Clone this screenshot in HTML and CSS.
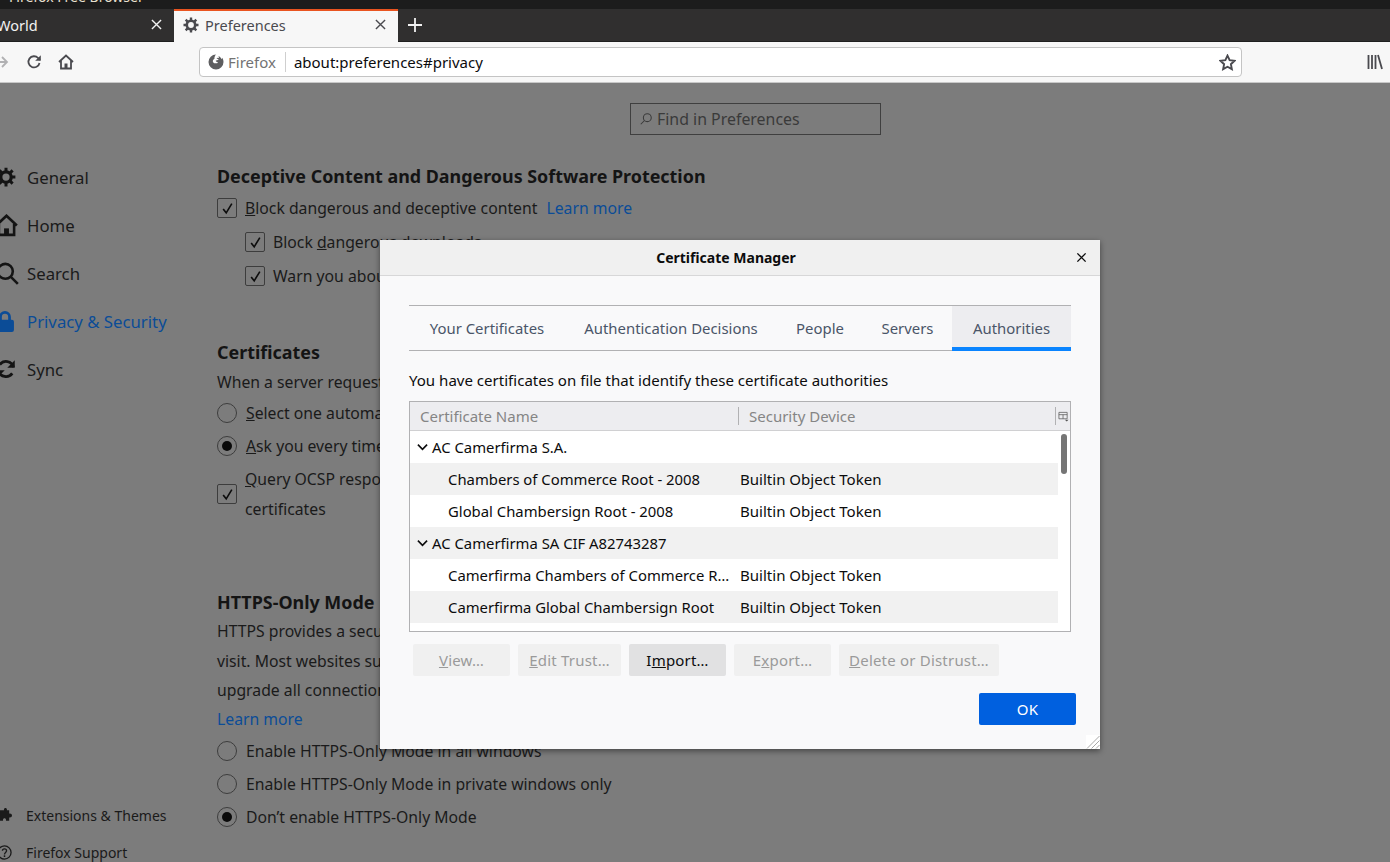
FILE: index.html
```html
<!DOCTYPE html>
<html lang="en">

<head>
    <meta charset="UTF-8">
    <meta name="viewport" content="width=device-width, initial-scale=1.0">
    <title>Preferences</title>
    <link rel="stylesheet" href="styles.css">
</head>

<body>
    <div class="titlebar"><span>Firefox Free Browser</span></div>

    <div class="tabbar">
        <div class="tab">
            <span class="tab-title">World</span>
            <svg class="tab-close" viewBox="0 0 12 12"><path d="M1 1l10 10M11 1L1 11" /></svg>
        </div>
        <div class="tab tab-active">
            <svg class="tab-icon" viewBox="0 0 16 16"><use href="#gear" /></svg>
            <span class="tab-title">Preferences</span>
            <svg class="tab-close" viewBox="0 0 12 12"><path d="M1 1l10 10M11 1L1 11" /></svg>
        </div>
        <svg class="tab-new" viewBox="0 0 14 14"><path d="M7 0v14M0 7h14" /></svg>
    </div>

    <div class="toolbar">
        <svg class="tool tool-forward" viewBox="0 0 16 16"><path d="M1 8h12M8 3l5 5-5 5" /></svg>
        <svg class="tool tool-reload" viewBox="0 0 16 16"><path d="M13.5 9a5.6 5.6 0 1 1-1.4-5L14 6" /><path class="solid" d="M14.8 1.2v5.6H9.2z" /></svg>
        <svg class="tool tool-home" viewBox="0 0 16 16"><path d="M1 8l7-6.500L15 8M3 6.500V14.500h10V6.500" /><path class="solid" d="M6.500 9.500h3v5h-3z" /></svg>
        <div class="urlbar">
            <svg class="identity" viewBox="0 0 16 16"><path class="solid" d="M8 .5a7.500 7.500 0 1 0 7.500 7.500c0-1.600-.5-3-1.300-4.200l-.5 1.400C13 3.700 11.800 2.500 10.400 2c.5.800.7 1.500.7 2.200C10.300 3.500 9 3.800 8.500 4.500c1 .2 1.800.5 2 1.500-.8-.2-2 .2-2.800.8.200 1 1.300 1.500 2.300 1.400-.5 1-1.500 1.300-2.500 1.100C6 9.500 5 8.500 4.800 7.200 5 6 5.500 5.200 6.500 4.800 6.200 3.500 6.800 1.800 8 .5z" /></svg>
            <span class="identity-label">Firefox</span>
            <span class="url">about:preferences#privacy</span>
            <svg class="star" viewBox="0 0 16 16"><path d="M8 1.500l2 4.300 4.700.6-3.500 3.200.9 4.700L8 12l-4.100 2.300.9-4.700L1.300 6.400 6 5.800z" /></svg>
        </div>
        <svg class="tool tool-library" viewBox="0 0 16 16"><path d="M1.500 1v14M5 1v14M8.500 1v14M11 1l4 14" /></svg>
    </div>

    <div class="prefs">
        <nav class="sidebar">
            <ul class="nav-list">
                <li class="nav-item">
                    <svg class="nav-gear" viewBox="0 0 16 16"><use href="#gear" /></svg>General
                </li>
                <li class="nav-item">
                    <svg class="nav-home" viewBox="0 0 16 16"><path d="M.8 8L8 1.200 15.200 8M2.700 7v7.500h10.600V7" /><path class="solid" d="M6.300 10h3.400v4.500H6.300z" /></svg>Home
                </li>
                <li class="nav-item">
                    <svg class="nav-search" viewBox="0 0 16 16"><circle cx="6.500" cy="6.500" r="5.200" /><path d="M10.500 10.500L15.200 15.200" /></svg>Search
                </li>
                <li class="nav-item nav-active">
                    <svg class="nav-lock" viewBox="0 0 16 16"><path class="solid" d="M8 .8a4.300 4.300 0 0 0-4.300 4.300V7H3a1.500 1.500 0 0 0-1.500 1.500v6A1.500 1.500 0 0 0 3 16h10a1.500 1.500 0 0 0 1.500-1.500v-6A1.500 1.500 0 0 0 13 7h-.7V5.100A4.300 4.300 0 0 0 8 .8zM5.700 7V5.100a2.300 2.300 0 0 1 4.600 0V7z" /></svg>Privacy &amp; Security
                </li>
                <li class="nav-item">
                    <svg class="nav-sync" viewBox="0 0 16 16"><path d="M14 6.500A6.200 6.200 0 0 0 3 4.500M2 9.500a6.200 6.200 0 0 0 11 2" /><path class="solid" d="M15 1v6H9zM1 15V9h6z" /></svg>Sync
                </li>
            </ul>
            <ul class="nav-foot">
                <li class="foot-item">
                    <svg viewBox="0 0 16 16"><path class="solid" d="M5 2.500h2.500C7 1 8 0 9 0s2 1 1.500 2.500H13V6c1.500-.5 3 .5 3 2s-1.500 2.500-3 2v3.500H9.500c.5-1.500-.5-2.500-1.500-2.500s-2 1-1.500 2.500H3V11C1.500 11.500 0 10.500 0 9s1.500-2.500 3-2V2.500z" /></svg>Extensions &amp; Themes
                </li>
                <li class="foot-item">
                    <svg viewBox="0 0 16 16"><circle cx="8" cy="8" r="7" /><path d="M5.800 6.200C5.800 3.500 10.200 3.500 10.200 6.200 10.200 8 8 8 8 10" /><path class="solid" d="M7.200 11h1.600v1.800H7.200z" /></svg>Firefox Support
                </li>
            </ul>
        </nav>

        <main class="content">
            <div class="find">
                <svg viewBox="0 0 16 16"><circle cx="9.500" cy="6.500" r="4.500" /><path d="M6 10l-4 4" /></svg>
                <span>Find in Preferences</span>
            </div>

            <h2 class="section-title title-deceptive">Deceptive Content and Dangerous Software Protection</h2>
            <div class="option opt-first">
                <span class="checkbox"><svg viewBox="0 0 12 12"><path d="M2 6.500l2.800 3.500L10 1.500" /></svg></span>
                <span><u>B</u>lock dangerous and deceptive content</span>
                <a class="link link-inline">Learn more</a>
            </div>
            <div class="option option-sub">
                <span class="checkbox"><svg viewBox="0 0 12 12"><path d="M2 6.500l2.800 3.500L10 1.500" /></svg></span>
                <span>Block <u>d</u>angerous downloads</span>
            </div>
            <div class="option option-sub">
                <span class="checkbox"><svg viewBox="0 0 12 12"><path d="M2 6.500l2.800 3.500L10 1.500" /></svg></span>
                <span>Warn you about unwanted and uncommon software</span>
            </div>

            <h2 class="section-title title-certs">Certificates</h2>
            <p class="line line-request">When a server requests your personal certificate</p>
            <div class="option opt-radio">
                <span class="radio"></span>
                <span><u>S</u>elect one automatically</span>
            </div>
            <div class="option opt-radio">
                <span class="radio radio-on"></span>
                <span><u>A</u>sk you every time</span>
            </div>
            <div class="option opt-query">
                <span class="checkbox"><svg viewBox="0 0 12 12"><path d="M2 6.500l2.800 3.500L10 1.500" /></svg></span>
                <span class="query-text"><u>Q</u>uery OCSP responder servers to confirm the current validity of<br>certificates</span>
            </div>

            <h2 class="section-title title-https">HTTPS-Only Mode</h2>
            <p class="line line-https">HTTPS provides a secure, encrypted connection between Firefox and the websites you<br>visit. Most websites support HTTPS, and if HTTPS-Only Mode is enabled, then Firefox will<br>upgrade all connections to HTTPS.</p>
            <a class="link link-block">Learn more</a>
            <div class="option opt-radio opt-https">
                <span class="radio"></span>
                <span>Enable HTTPS-Only Mode in all windows</span>
            </div>
            <div class="option opt-radio">
                <span class="radio"></span>
                <span>Enable HTTPS-Only Mode in private windows only</span>
            </div>
            <div class="option opt-radio">
                <span class="radio radio-on"></span>
                <span>Don’t enable HTTPS-Only Mode</span>
            </div>
        </main>
    </div>

    <!-- certificate manager dialog -->
    <div class="dialog">
        <div class="dialog-head">
            <span class="dialog-title">Certificate Manager</span>
            <svg class="dialog-close" viewBox="0 0 12 12"><path d="M1.500 1.500l9 9M10.500 1.500l-9 9" /></svg>
        </div>
        <div class="dialog-body">
            <div class="cert-tabs">
                <div class="cert-tab tab-w1">Your Certificates</div>
                <div class="cert-tab tab-w2">Authentication Decisions</div>
                <div class="cert-tab tab-w3">People</div>
                <div class="cert-tab tab-w4">Servers</div>
                <div class="cert-tab tab-w5 cert-tab-on">Authorities</div>
            </div>
            <p class="cert-intro">You have certificates on file that identify these certificate authorities</p>

            <div class="tree">
                <div class="tree-head">
                    <span class="col-name">Certificate Name</span>
                    <span class="col-device">Security Device</span>
                    <svg class="col-picker" viewBox="0 0 12 12"><path d="M1 1.500h9v7H1zM1 4h9M5.500 4v4.500" /><path class="solid" d="M7.500 9.500h4l-2 2z" /></svg>
                </div>
                <div class="tree-rows">
                    <div class="row row-group">
                        <svg class="chevron" viewBox="0 0 12 8"><path d="M1 1.500l5 5 5-5" /></svg>
                        <span class="cell-name">AC Camerfirma S.A.</span>
                    </div>
                    <div class="row row-alt">
                        <span class="cell-name">Chambers of Commerce Root - 2008</span>
                        <span class="cell-device">Builtin Object Token</span>
                    </div>
                    <div class="row">
                        <span class="cell-name">Global Chambersign Root - 2008</span>
                        <span class="cell-device">Builtin Object Token</span>
                    </div>
                    <div class="row row-group row-alt">
                        <svg class="chevron" viewBox="0 0 12 8"><path d="M1 1.500l5 5 5-5" /></svg>
                        <span class="cell-name">AC Camerfirma SA CIF A82743287</span>
                    </div>
                    <div class="row">
                        <span class="cell-name">Camerfirma Chambers of Commerce Root</span>
                        <span class="cell-device">Builtin Object Token</span>
                    </div>
                    <div class="row row-alt">
                        <span class="cell-name">Camerfirma Global Chambersign Root</span>
                        <span class="cell-device">Builtin Object Token</span>
                    </div>
                    <div class="scroll-thumb"></div>
                </div>
            </div>

            <div class="cert-actions">
                <button class="btn btn-w1" disabled><u>V</u>iew…</button>
                <button class="btn btn-w2" disabled><u>E</u>dit Trust…</button>
                <button class="btn btn-w1 btn-live">I<u>m</u>port…</button>
                <button class="btn btn-w1" disabled>E<u>x</u>port…</button>
                <button class="btn btn-w3" disabled><u>D</u>elete or Distrust…</button>
            </div>
            <div class="dialog-foot">
                <button class="btn btn-w1 btn-ok">OK</button>
            </div>
        </div>
        <svg class="grip" viewBox="0 0 14 14"><path d="M13.500 1L1 13.500M13.500 5.500L5.500 13.500M13.500 10L10 13.500" /></svg>
    </div>

    <svg class="defs" width="0" height="0">
        <defs>
            <g id="gear">
                <circle cx="8" cy="8" r="4.200" fill="none" stroke-width="2.600" />
                <path stroke-width="2.400" d="M8 .5v3M8 12.500v3M.5 8h3M12.500 8h3M2.700 2.700l2.100 2.100M11.200 11.200l2.100 2.100M13.300 2.700l-2.100 2.100M4.800 11.200l-2.100 2.100" />
            </g>
        </defs>
    </svg>
</body>

</html>
```

FILE: styles.css
```css
/* reset */
* {
    margin: 0;
    padding: 0;
    box-sizing: border-box;
}

html,
body {
    height: 100%;
    overflow: hidden;
}

body {
    display: flex;
    flex-direction: column;
    position: relative;
    background-color: #7c7c7c;
    color: #1a1a1a;
    font-family: "Noto Sans", "Liberation Sans", sans-serif;
    font-size: 15px;
}

svg {
    fill: none;
    stroke: currentColor;
    stroke-width: 1.800;
    flex-shrink: 0;
}

svg .solid {
    fill: currentColor;
    stroke: none;
}

.defs {
    position: absolute;
}

ul {
    list-style: none;
}

/* window title, only its lower edge is on screen */
.titlebar {
    height: 9px;
    background-color: #1c1c1c;
    overflow: hidden;
    flex-shrink: 0;
}

.titlebar span {
    display: block;
    margin: -11px 0 0 9px;
    line-height: 16px;
    color: #e9e0d0;
    font-size: 14px;
}

/* tabs */
.tabbar {
    height: 33px;
    display: flex;
    align-items: stretch;
    background-color: #302f2f;
    border-bottom: 1px solid #1f1f1f;
    flex-shrink: 0;
}

.tab {
    width: 174px;
    display: flex;
    align-items: center;
    padding-bottom: 1px;
    color: #f2f2f2;
    font-size: 14.500px;
}

.tab .tab-title {
    flex: 1;
    margin-left: -3px;
}

.tab-close {
    width: 11px;
    height: 11px;
    margin-right: 12px;
    stroke-width: 1.500;
}

.tab-active {
    width: 224px;
    height: 33px;
    padding: 0 0 4px 9px;
    border-top: 2px solid #e95420;
    background-color: #f7f7f7;
    color: #4a4a4f;
}

.tab-active .tab-title {
    margin-left: 6px;
}

.tab-icon {
    width: 16px;
    height: 16px;
}

.tab-new {
    width: 14px;
    height: 14px;
    margin: 9px 0 0 10px;
    color: #f2f2f2;
    stroke-width: 1.800;
}

/* toolbar */
.toolbar {
    height: 41px;
    display: flex;
    align-items: center;
    background-color: #f7f7f7;
    border-bottom: 1px solid #c8c8c8;
    flex-shrink: 0;
    color: #4a4a4f;
}

.tool {
    width: 16px;
    height: 16px;
}

.tool-forward {
    margin-left: -6px;
    color: #b1b1b3;
}

.tool-reload {
    margin-left: 16px;
}

.tool-home {
    margin-left: 16px;
}

.urlbar {
    width: 1043px;
    height: 30px;
    margin-left: 125px;
    display: flex;
    align-items: center;
    background-color: #ffffff;
    border: 1px solid #c4c4c4;
    border-radius: 4px;
    padding: 0 5px 0 8px;
}

.identity {
    width: 16px;
    height: 16px;
    color: #5e5e60;
}

.identity-label {
    margin-left: 4px;
    padding-right: 9px;
    height: 20px;
    line-height: 20px;
    border-right: 1px solid #cfcfcf;
    color: #737373;
    font-size: 15px;
}

.url {
    flex: 1;
    margin-left: 8px;
    color: #0c0c0d;
    font-size: 15px;
}

.star {
    width: 17px;
    height: 17px;
    color: #4a4a4f;
}

.tool-library {
    margin-left: 125px;
}

/* preferences page */
.prefs {
    flex: 1;
    display: flex;
    min-height: 0;
}

.sidebar {
    width: 217px;
    display: flex;
    flex-direction: column;
    justify-content: space-between;
    padding-top: 70px;
    flex-shrink: 0;
}

.nav-item {
    height: 48px;
    display: flex;
    align-items: center;
    font-size: 16.750px;
}

.nav-gear,
.nav-sync {
    width: 20px;
    height: 20px;
    margin: 0 11px 0 -4px;
    stroke-width: 2.200;
    color: #141414;
}

.nav-home {
    width: 23px;
    height: 23px;
    margin: 0 9px 0 -5px;
    color: #141414;
}

.nav-search {
    width: 23px;
    height: 23px;
    margin: 0 8px 0 -4px;
    color: #141414;
}

.nav-lock {
    width: 22px;
    height: 22px;
    margin: 0 11px 0 -6px;
}

.nav-active {
    color: #0b4c97;
}

.nav-foot {
    margin-bottom: -9px;
}

.foot-item {
    display: flex;
    align-items: center;
    height: 37px;
    font-size: 14px;
    margin-left: -3px;
}

.foot-item svg {
    width: 15px;
    height: 15px;
    margin-right: 14px;
    stroke-width: 1.400;
}

.content {
    flex: 1;
    min-width: 0;
    font-size: 15.750px;
}

.find {
    width: 251px;
    height: 32px;
    margin: 20px 0 0 413px;
    display: flex;
    align-items: center;
    gap: 4px;
    padding-left: 8px;
    border: 1px solid #3f3f3f;
    color: #3a3a3a;
    font-size: 15.900px;
}

.find svg {
    width: 14px;
    height: 14px;
    stroke-width: 1.200;
}

.section-title {
    font-size: 17.900px;
    line-height: 26px;
    font-weight: 700;
    color: #141414;
}

.title-deceptive {
    margin-top: 28px;
}

.title-certs {
    margin-top: 46px;
}

.title-https {
    margin-top: 65px;
}

.option {
    display: flex;
    align-items: center;
    height: 34px;
    white-space: nowrap;
}

.opt-first {
    margin-top: 2px;
}

.option-sub {
    margin-left: 28px;
}

.opt-radio {
    height: 33px;
}

.opt-query {
    height: 60px;
    margin-top: 2px;
}

.opt-https {
    margin-top: 2px;
}

.checkbox {
    width: 20px;
    height: 20px;
    margin-right: 8px;
    display: flex;
    align-items: center;
    justify-content: center;
    border: 1px solid #3d3d3d;
    border-radius: 2px;
    flex-shrink: 0;
}

.checkbox svg {
    width: 13px;
    height: 13px;
    color: #0d0d0d;
    stroke-width: 1.500;
}

.radio {
    width: 20px;
    height: 20px;
    margin-right: 9px;
    display: flex;
    align-items: center;
    justify-content: center;
    border: 1px solid #3d3d3d;
    border-radius: 50%;
    flex-shrink: 0;
}

.radio-on::after {
    content: "";
    width: 10px;
    height: 10px;
    border-radius: 50%;
    background-color: #0a0a0a;
}

.query-text {
    line-height: 30px;
}

.line {
    white-space: nowrap;
}

.line-request {
    margin-top: 3px;
    line-height: 28px;
}

.line-https {
    margin-top: 2px;
    line-height: 29.500px;
}

.link {
    color: #0b4c97;
}

.link-inline {
    margin-left: 9px;
}

.link-block {
    display: block;
    line-height: 27px;
}

/* dialog sits over the dimmed page */
.dialog {
    position: absolute;
    left: 380px;
    top: 240px;
    width: 720px;
    height: 509px;
    background-color: #f9f9fa;
    box-shadow: 0 2px 6px rgba(0, 0, 0, 0.45);
    color: #0c0c0d;
}

.dialog-head {
    height: 36px;
    display: flex;
    align-items: center;
    justify-content: center;
    padding-right: 28px;
    background-color: #f0f0f0;
    border-bottom: 1px solid #d7d7d8;
    position: relative;
}

.dialog-title {
    font-size: 14px;
    font-weight: 700;
}

.dialog-close {
    position: absolute;
    right: 13px;
    top: 12px;
    width: 11px;
    height: 11px;
    stroke-width: 1.500;
}

.dialog-body {
    padding: 29px 24px 0 29px;
}

.cert-tabs {
    width: 662px;
    height: 46px;
    display: flex;
    border-top: 1px solid #b1b1b3;
    border-bottom: 1px solid #b1b1b3;
}

.cert-tab {
    display: flex;
    align-items: center;
    justify-content: center;
    color: #4a5568;
    font-size: 14.900px;
}

.tab-w1 {
    width: 156px;
}

.tab-w2 {
    width: 212px;
}

.tab-w3 {
    width: 86px;
}

.tab-w4 {
    width: 89px;
}

.tab-w5 {
    width: 119px;
}

.cert-tab-on {
    padding-top: 3px;
    background-color: #ededf0;
    border-bottom: 4px solid #0a84ff;
    margin-bottom: -1px;
}

.cert-intro {
    margin-top: 19px;
    line-height: 20px;
    font-size: 15.050px;
}

.tree {
    width: 662px;
    height: 231px;
    margin-top: 11px;
    border: 1px solid #b1b1b3;
    background-color: #ffffff;
    font-size: 15px;
    overflow: hidden;
}

.tree-head {
    height: 29px;
    display: flex;
    align-items: center;
    background-color: #ededf0;
    border-bottom: 1px solid #d0d0d2;
    color: #858585;
}

.col-name {
    width: 329px;
    padding-left: 10px;
    height: 18px;
    line-height: 18px;
    border-right: 1px solid #b1b1b3;
}

.col-device {
    flex: 1;
    padding-left: 10px;
    height: 18px;
    line-height: 18px;
    border-right: 1px solid #b1b1b3;
    margin-right: 2px;
}

.col-picker {
    width: 11px;
    height: 11px;
    margin-right: 1px;
    stroke-width: 0.800;
    color: #555555;
}

.tree-rows {
    position: relative;
}

.row {
    width: 648px;
    height: 32px;
    display: flex;
    align-items: center;
    white-space: nowrap;
}

.row-alt {
    background-color: #f1f1f1;
}

.cell-name {
    width: 330px;
    padding: 0 8px 0 38px;
    font-size: 14.850px;
    overflow: hidden;
    text-overflow: ellipsis;
}

.cell-device {
    flex: 1;
    font-size: 15.050px;
}

.row-group .cell-name {
    padding-left: 4px;
}

.chevron {
    width: 11px;
    height: 8px;
    margin-left: 7px;
    stroke-width: 1.800;
}

.scroll-thumb {
    position: absolute;
    left: 651px;
    top: 3px;
    width: 6px;
    height: 40px;
    border-radius: 3px;
    background-color: #757575;
}

.cert-actions {
    display: flex;
    gap: 8px;
    margin: 12px 0 0 4px;
}

.btn {
    height: 32px;
    border: none;
    border-radius: 2px;
    background-color: #e1e1e2;
    color: #0c0c0d;
    font-family: inherit;
    font-size: 15px;
    letter-spacing: 0.2px;
}

.btn:disabled {
    background-color: #f0f0f0;
    color: #9a9a9a;
}

.btn-w1 {
    width: 97px;
}

.btn-w2 {
    width: 103px;
}

.btn-w3 {
    width: 160px;
}

.dialog-foot {
    display: flex;
    justify-content: flex-end;
    margin-top: 17px;
}

.btn-ok {
    background-color: #0060df;
    color: #ffffff;
}

.grip {
    position: absolute;
    right: 0;
    bottom: 0;
    width: 14px;
    height: 14px;
    background-color: #ffffff;
    color: #a8a8a8;
    stroke-width: 1;
}
```
